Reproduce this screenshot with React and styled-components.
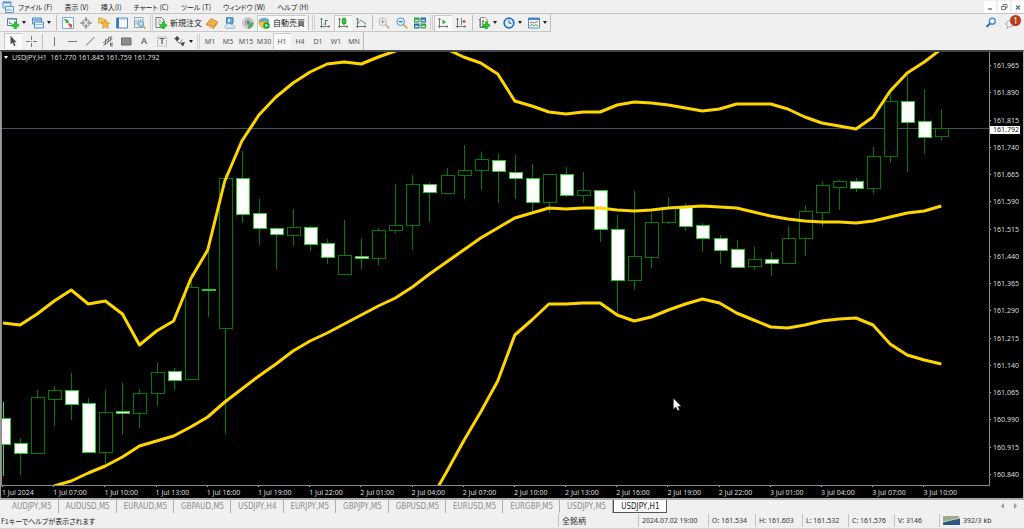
import React, { useState } from "react";
import styled, { createGlobalStyle, css } from "styled-components";

const STEP = 17.06;
const LEFT = 3;
const VIEW = { x: 2, y: 52, w: 987, h: 433 };

// high, body top, body bottom, low, bearish
const candles = [
  [402, 418, 444, 476, 1], [438, 443, 453, 475, 1], [390, 397, 453, 453, 0], [386, 390, 399, 426, 0],
  [373, 390, 404, 420, 1], [398, 403, 452, 452, 1], [390, 412, 452, 464, 0], [383, 411, 413, 435, 1],
  [389, 393, 413, 428, 0], [363, 372, 393, 406, 0], [368, 371, 380, 390, 1], [274, 287, 379, 380, 0],
  [251, 289, 290, 317, 1], [174, 178, 328, 434, 0], [151, 178, 214, 223, 1], [199, 213, 228, 245, 1],
  [227, 228, 234, 269, 1], [209, 227, 235, 246, 0], [226, 227, 244, 251, 1], [239, 243, 257, 264, 1],
  [220, 255, 274, 274, 0], [238, 256, 258, 269, 1], [228, 230, 258, 265, 0], [184, 225, 230, 233, 0],
  [175, 184, 225, 250, 0], [183, 184, 192, 222, 1], [168, 175, 193, 193, 0], [145, 170, 175, 199, 0],
  [152, 159, 170, 190, 0], [153, 160, 171, 203, 1], [155, 172, 178, 199, 1], [164, 178, 202, 212, 1],
  [174, 174, 202, 213, 0], [167, 174, 195, 197, 1], [172, 190, 195, 203, 0], [190, 190, 229, 242, 1],
  [215, 229, 280, 314, 1], [191, 256, 280, 290, 0], [213, 222, 257, 268, 0], [197, 207, 222, 224, 0],
  [203, 207, 226, 231, 1], [223, 225, 238, 252, 1], [235, 238, 250, 264, 1], [240, 249, 267, 267, 1],
  [247, 259, 266, 270, 0], [252, 259, 263, 276, 1], [226, 238, 263, 263, 0], [205, 211, 238, 256, 0],
  [182, 185, 212, 227, 0], [180, 181, 187, 210, 0], [178, 181, 188, 192, 1], [147, 156, 188, 194, 0],
  [92, 101, 156, 163, 0], [75, 101, 122, 172, 1], [89, 121, 137, 154, 1], [109, 128, 136, 141, 0],
];

const upperBand = [
  323, 325, 314, 301, 290, 304, 301, 314, 345, 331, 321, 279, 250, 181, 141, 115, 97, 83, 72, 64,
  62, 64, 57, 51, 46, 43, 49, 57, 63, 74, 101, 106, 112, 114, 112, 112, 105, 102, 103, 105,
  108, 111, 109, 104, 104, 104, 109, 117, 123, 126, 129, 117, 91, 73, 62, 49,
];
const middleBand = [
  506, 500, 494, 486, 481, 473, 466, 457, 446, 441, 436, 427, 417, 402, 389, 376, 364, 351, 341, 333,
  324, 315, 306, 298, 287, 274, 262, 250, 238, 228, 218, 213, 208, 209, 208, 208, 210, 211, 210, 208,
  207, 206, 207, 208, 212, 216, 219, 221, 222, 222, 223, 221, 217, 213, 211, 206,
];
const lowerBand = [
  472, 441, 412, 381, 335, 320, 304, 304, 303, 303, 315, 321, 317, 310, 304, 299, 303, 313, 320, 327,
  328, 325, 321, 319, 318, 325, 344, 355, 360, 364,
];

const prices = [
  "161.965", "161.890", "161.815", "161.740", "161.665", "161.590", "161.515", "161.440",
  "161.365", "161.290", "161.215", "161.140", "161.065", "160.990", "160.915", "160.840",
];
const times = [
  "1 Jul 2024", "1 Jul 07:00", "1 Jul 10:00", "1 Jul 13:00", "1 Jul 16:00", "1 Jul 19:00", "1 Jul 22:00",
  "2 Jul 01:00", "2 Jul 04:00", "2 Jul 07:00", "2 Jul 10:00", "2 Jul 13:00", "2 Jul 16:00", "2 Jul 19:00",
  "2 Jul 22:00", "3 Jul 01:00", "3 Jul 04:00", "3 Jul 07:00", "3 Jul 10:00",
];
const menus = ["ファイル (F)", "表示 (V)", "挿入(I)", "チャート (C)", "ツール (T)", "ウィンドウ (W)", "ヘルプ (H)"];
const frames = ["M1", "M5", "M15", "M30", "H1", "H4", "D1", "W1", "MN"];
const charts = [
  "AUDJPY,M5", "AUDUSD,M5", "EURAUD,M5", "GBPAUD,M5", "USDJPY,H4", "EURJPY,M5",
  "GBPJPY,M5", "GBPUSD,M5", "EURUSD,M5", "EURGBP,M5", "USDJPY,M5", "USDJPY,H1",
];

const barX = (i) => LEFT + i * STEP;
const toPoints = (list, first = 0) => list.map((y, i) => `${barX(i + first)},${y}`).join(" ");

const Icon = ({ children }) => (
  <svg width="12" height="12" viewBox="0 0 12 12" fill="none" aria-hidden="true">
    {children}
  </svg>
);
const Plus = () => <path d="M7.2 4.8h2.4v2.4H12v2.4H9.6V12H7.2V9.6H4.8V7.2h2.4z" fill="#22c928" stroke="#109a16" strokeWidth=".4" />;
const Axes = () => <path d="M2.5 1v10M1 9.5h10M1.5 2.5l1-1.5 1 1.5M9.5 8.5l1.5 1-1.5 1" stroke="#777" />;

const icons = {
  app: (
    <Icon>
      <path d="M1 1h8v6H1z" fill="#d6eafa" stroke="#5a9bd0" />
      <path d="M1 1.5h8" stroke="#4b8dc6" strokeWidth="1.5" />
      <path d="M3.5 5.5h8v6h-8z" fill="#eef7fd" stroke="#5a9bd0" />
      <path d="M5 10V8m2 2V7.500m2 2.500V8.500" stroke="#5a9bd0" />
    </Icon>
  ),
  newChart: (
    <Icon>
      <path d="M.5 1.500h9v7h-9z" fill="#fff" stroke="#5d7f93" />
      <path d="M1 2h8" stroke="#6d9bb5" strokeWidth="1.5" />
      <path d="M2.500 4v3M2 6.500h3" stroke="#6a8292" strokeWidth=".8" />
      <Plus />
    </Icon>
  ),
  profiles: (
    <Icon>
      <path d="M.5 1h9v6h-9z" fill="#bfdcf3" stroke="#4a8cc5" />
      <path d="M.5 3h9" stroke="#4a8cc5" />
      <path d="M2.500 5h9v6h-9z" fill="#e7f2fb" stroke="#4a8cc5" />
      <path d="M2.500 7.500h9" stroke="#8bb8de" />
    </Icon>
  ),
  market: (
    <Icon>
      <path d="M.5 .5h11v11H.5z" fill="#f4f9fd" stroke="#7ea9cf" />
      <path d="M2 2.500l2-.5 1.500 1.500L6.500 3v3H3.500l1-1z" fill="#27a52c" />
      <path d="M6 7l1.500-1L9 7.500l1-.5v3.500H7l.8-1z" fill="#d9532b" />
    </Icon>
  ),
  crosshair: (
    <Icon>
      <circle cx="6" cy="6" r="3.600" stroke="#888" />
      <path d="M6 0v5M6 7v5M0 6h5M7 6h5" stroke="#777" />
    </Icon>
  ),
  navigator: (
    <Icon>
      <path d="M0 2V1h4l1 1.500h3V6H0z" fill="#efc65c" stroke="#c89a36" strokeWidth=".6" />
      <path d="M7.500 2.800l1.300 2.800 3 .3-2.200 2.200.6 3.200-2.700-1.600-2.800 1.600.6-3.200L3 5.900l3.100-.3z" fill="#f8ba2e" stroke="#bb8222" strokeWidth=".6" />
    </Icon>
  ),
  terminal: (
    <Icon>
      <path d="M.5 1h11v10H.5z" fill="#f8fbfe" stroke="#4f8ec4" />
      <path d="M2 1v10" stroke="#3a79b3" strokeWidth="2" />
      <path d="M4.500 2.500h1.500m1 0h1.500" stroke="#9bc1e2" />
    </Icon>
  ),
  tester: (
    <Icon>
      <path d="M.5 .5h8.500v10H.5z" fill="#f5f8fb" stroke="#8faabd" />
      <path d="M2 3v5M4 2v5M6.500 2v2" stroke="#9aabb6" />
      <circle cx="6.700" cy="6.700" r="2.800" fill="#b9dbf1" stroke="#5e9bc8" />
      <path d="M8.800 8.800l2.700 2.700" stroke="#d39b43" strokeWidth="1.500" />
    </Icon>
  ),
  order: (
    <Icon>
      <path d="M1 .5h5.500L9 3v7.500H1z" fill="#fafafa" stroke="#777" />
      <path d="M3 3h3M3 5h3M3 7h2" stroke="#888" strokeWidth=".8" />
      <Plus />
    </Icon>
  ),
  book: (
    <Icon>
      <path d="M.5 7L5 1.500l6.500 3.300L7.500 10z" fill="#efb048" stroke="#b9761e" strokeWidth=".7" />
      <path d="M.5 7l7 3.200v1.500L.8 8.500z" fill="#fff0cf" stroke="#b9761e" strokeWidth=".6" />
      <path d="M7.500 10.200l4-5.200v1.800l-4 4.900z" fill="#cf8527" />
    </Icon>
  ),
  person: (
    <Icon>
      <path d="M2.500 .8h6.500v5.500h-6.500z" fill="#69b1e9" stroke="#2e78b8" />
      <path d="M4 2h2v3H4z" fill="#d9effc" />
      <path d="M3 11.200C.3 11.400.2 8.300 2.500 8c.6-2 3.600-2 4.300-.3 1.600-.9 2.900.3 2.700 1.300 2.200.1 2 2.200.2 2.200z" fill="#e5eff8" stroke="#7d9fbd" strokeWidth=".8" />
    </Icon>
  ),
  signal: (
    <Icon>
      <circle cx="6" cy="6" r="5.200" fill="#e4e4e4" stroke="#aaa" />
      <circle cx="6" cy="5.800" r="3" fill="#bfc4c6" stroke="#8a8f92" />
      <circle cx="6" cy="5.500" r="1.300" fill="#526b75" />
      <path d="M6 12l.5-5.500c3-.5 5-2 5-.5 0 3-2 5.500-5.500 6z" fill="#5cab62" />
    </Icon>
  ),
  auto: (
    <Icon>
      <path d="M1 4c1-3.500 9-4 10 0l-1.500 2h-7z" fill="#5fb0d8" stroke="#3681aa" strokeWidth=".6" />
      <path d="M1 4.500h9V9l-4 2.500C1.500 9 .8 7 1 4.500z" fill="#f4c13e" stroke="#c88b1d" strokeWidth=".6" />
      <circle cx="8.500" cy="8.500" r="3.200" fill="#16a52c" />
      <path d="M7.500 6.800v3.400l2.800-1.700z" fill="#fff" />
    </Icon>
  ),
  bars: (
    <Icon>
      <Axes />
      <path d="M6.500 3v5M4.800 7h1.700M6.500 3.500h2.200" stroke="#239c35" />
    </Icon>
  ),
  candle: (
    <Icon>
      <Axes />
      <path d="M7 .5v8" stroke="#138c22" />
      <path d="M5.200 1.800h3.600v4.700H5.200z" fill="#2dcf3f" stroke="#12991f" strokeWidth=".8" />
    </Icon>
  ),
  line: (
    <Icon>
      <Axes />
      <path d="M2.500 7.500C5 2 6.500 3 7.500 4.500L11 7" stroke="#3b9453" />
    </Icon>
  ),
  zoomIn: (
    <Icon>
      <circle cx="4.700" cy="4.700" r="3.800" fill="#f3f3f3" stroke="#b5b5b5" />
      <path d="M2.700 4.700h4M4.700 2.700v4" stroke="#999" />
      <path d="M7.600 7.600l3.700 3.700" stroke="#b5b5b5" strokeWidth="1.800" />
    </Icon>
  ),
  zoomOut: (
    <Icon>
      <circle cx="4.700" cy="4.700" r="3.800" fill="#e0f0fc" stroke="#4a96cf" />
      <path d="M2.700 4.700h4" stroke="#2c6ea5" strokeWidth="1.200" />
      <path d="M7.600 7.600l3.700 3.700" stroke="#d9a545" strokeWidth="1.800" />
    </Icon>
  ),
  tile: (
    <Icon>
      <path d="M0 .5h5.500v5H0zM6.500 6.500H12v5H6.500z" fill="#36a143" />
      <path d="M6.500 .5H12v5H6.500zM0 6.500h5.500v5H0z" fill="#2870a8" />
      <path d="M1 3.500h3.500M7.500 3.500H11M1 9.500h3.500M7.500 9.500H11" stroke="#d8efdf" strokeWidth="1.500" />
    </Icon>
  ),
  scroll: (
    <Icon>
      <Axes />
      <path d="M5.500 2.500v5l3.500-2.500z" fill="#24b43a" />
    </Icon>
  ),
  shift: (
    <Icon>
      <Axes />
      <path d="M6.500 1v7" stroke="#5a8eb8" />
      <path d="M11 4.500H8" stroke="#d65524" strokeWidth="1.300" />
      <path d="M9.500 2.500v4L7 4.500z" fill="#d65524" />
    </Icon>
  ),
  indicators: (
    <Icon>
      <path d="M2.500 .5H7L9 2.500v7H2.500z" fill="#fafafa" stroke="#888" />
      <path d="M.5 2.500h1.500v8H7" stroke="#777" />
      <path d="M6 2.500C4.500 2.500 5 5 4.500 8M4 4.500h2" stroke="#555" strokeWidth=".8" />
      <Plus />
    </Icon>
  ),
  clock: (
    <Icon>
      <circle cx="6" cy="6" r="4.800" fill="#e2f1fc" stroke="#2972b6" strokeWidth="1.800" />
      <path d="M6 3v3.300h2.500" stroke="#41637f" />
    </Icon>
  ),
  template: (
    <Icon>
      <path d="M.5 1h11v10H.5z" fill="#f7fbfe" stroke="#528ebd" />
      <path d="M.5 2h11" stroke="#4988bd" strokeWidth="2" />
      <path d="M2 6l2-1 1.500 1L10 4.500" stroke="#b5654e" />
      <path d="M2 9l2-1.500L6 9l1.500-1.500L10 9" stroke="#459a57" />
    </Icon>
  ),
  pointer: (
    <Icon>
      <path d="M3.500 .8v8.700l2-1.900 1.500 3.600 1.500-.7-1.500-3.300h2.700z" fill="#4e4e4e" />
    </Icon>
  ),
  cross: (
    <Icon>
      <path d="M6.500 1v4M6.500 8v4M1 6.500h4M8 6.500h4" stroke="#777" />
      <path d="M6 6h1v1H6z" fill="#777" />
    </Icon>
  ),
  vline: <Icon><path d="M6.500 2v9" stroke="#777" /></Icon>,
  hline: <Icon><path d="M2 6.500h9" stroke="#777" /></Icon>,
  diag: <Icon><path d="M2 10.500l8.500-8.500" stroke="#666" /></Icon>,
  channel: (
    <Icon>
      <path d="M1 8l8-6M1.500 10.500l9-7M4 3.500L3 10M7 1.500L5.500 8.500M9.500 1L8 6.500" stroke="#666" strokeWidth=".9" />
      <path d="M11 8H8.500v3H11M8.500 9.500h2" stroke="#555" strokeWidth=".8" />
    </Icon>
  ),
  rect: <Icon><path d="M1.500 3h9.500v7H1.500z" fill="#8c8c8c" stroke="#6c6c6c" /></Icon>,
  label: <Icon><path d="M1.500 2h9v9h-9z" stroke="#999" strokeDasharray="1 1" /></Icon>,
  shapes: (
    <Icon>
      <path d="M0 4l3-3 3 3-1.500.5L3 7 1.800 4.500zM6 8l5-1-2 4.500z" fill="#444" />
      <path d="M3.500 7l2 1 3-3.500" stroke="#777" />
    </Icon>
  ),
};

// drop: arrow for a drop-down list, sep: divider after the button, grip: start of next strip
const mainTools = [
  { icon: "newChart", name: "New chart", drop: true },
  { icon: "profiles", name: "Profiles", drop: true, sep: true },
  { icon: "market", name: "Market watch" },
  { icon: "crosshair", name: "Data window" },
  { icon: "navigator", name: "Navigator" },
  { icon: "terminal", name: "Terminal" },
  { icon: "tester", name: "Strategy tester", grip: true },
  { icon: "order", name: "New order", text: "新規注文" },
  { icon: "book", name: "MetaEditor" },
  { icon: "person", name: "Community" },
  { icon: "signal", name: "Signals" },
  { icon: "auto", name: "Auto trading", text: "自動売買", pressed: true, sep: true, grip: true },
  { icon: "bars", name: "Bar chart" },
  { icon: "candle", name: "Candlesticks", pressed: true },
  { icon: "line", name: "Line chart", sep: true },
  { icon: "zoomIn", name: "Zoom in" },
  { icon: "zoomOut", name: "Zoom out" },
  { icon: "tile", name: "Tile windows", grip: true },
  { icon: "scroll", name: "Auto scroll", pressed: true },
  { icon: "shift", name: "Chart shift", sep: true },
  { icon: "indicators", name: "Indicators", drop: true },
  { icon: "clock", name: "Periods", drop: true },
  { icon: "template", name: "Templates", drop: true },
];
const drawTools = [
  { icon: "pointer", name: "Cursor", pressed: true },
  { icon: "cross", name: "Crosshair", sep: true },
  { icon: "vline", name: "Vertical line" },
  { icon: "hline", name: "Horizontal line" },
  { icon: "diag", name: "Trendline" },
  { icon: "channel", name: "Channel" },
  { icon: "rect", name: "Rectangle" },
  { letter: "A", name: "Text" },
  { icon: "label", letter: "T", name: "Label" },
  { icon: "shapes", name: "Arrows", drop: true },
];

const Tools = ({ items }) =>
  items.map((t) => (
    <React.Fragment key={t.name}>
      <ToolButton type="button" aria-label={t.text || t.name} $pressed={t.pressed} $drop={t.drop} $wide={t.text}>
        {t.icon && icons[t.icon]}
        {t.letter && <Letter $over={t.icon}>{t.letter}</Letter>}
        {t.text}
        {t.drop && <Caret />}
      </ToolButton>
      {t.sep && <Sep />}
      {t.grip && <Grip />}
    </React.Fragment>
  ));

function PriceChart() {
  return (
    <Plot viewBox={`${VIEW.x} ${VIEW.y} ${VIEW.w} ${VIEW.h}`} preserveAspectRatio="none" role="img" aria-label="USDJPY H1">
      <path d="M2 128.500H989" stroke="#43515c" />
      {candles.map(([high, top, bottom, low, bear], i) => {
        const x = Math.round(barX(i));
        return (
          <g key={i} stroke={bear ? "#2fc52f" : "#007c00"}>
            <path d={`M${x + 0.5} ${high}V${top}M${x + 0.5} ${bottom}V${low}`} stroke={i ? "#007c00" : "#46d846"} />
            <rect x={x - 6 + 0.5} y={top + 0.5} width="13" height={bottom - top} fill={bear ? "#fff" : "#000"} />
          </g>
        );
      })}
      <g fill="none" stroke="#ffd500" strokeWidth="3" strokeLinejoin="round">
        <polyline points={toPoints(upperBand)} />
        <polyline points={toPoints(middleBand)} />
        <polyline points={`438,487 ${toPoints(lowerBand, 26)}`} />
      </g>
      <path d="M673.500 398.500v10.500l2.400-2.200 1.800 3.700 1.700-.8-1.700-3.500h3.300z" fill="#fff" stroke="#555" strokeWidth=".4" />
    </Plot>
  );
}

export default function App() {
  const [frame, setFrame] = useState("H1");
  const [chart, setChart] = useState("USDJPY,H1");

  return (
    <Window>
      <GlobalStyle />
      <MenuBar>
        {icons.app}
        {menus.map((m) => (
          <MenuItem type="button" key={m}>{m}</MenuItem>
        ))}
        <WindowButtons>
          <WindowButton type="button" aria-label="Minimize">
            <Icon><path d="M4 8h4" stroke="#556b80" strokeWidth="1.300" /></Icon>
          </WindowButton>
          <WindowButton type="button" aria-label="Restore">
            <Icon><path d="M5 5V3.500h4V7H7.500M3.500 5.500h4v3h-4z" stroke="#667c92" /></Icon>
          </WindowButton>
          <WindowButton type="button" aria-label="Close">
            <Icon><path d="M4 4.500l4 4M8 4.500l-4 4" stroke="#556b80" strokeWidth="1.200" /></Icon>
          </WindowButton>
        </WindowButtons>
      </MenuBar>

      <ToolArea>
        <div>
          <Strip $edge>
            <Tools items={mainTools} />
          </Strip>
          <Strip>
            <Tools items={drawTools} />
            <Grip />
            {frames.map((f) => (
              <FrameButton type="button" key={f} $pressed={f === frame} onClick={() => setFrame(f)}>{f}</FrameButton>
            ))}
          </Strip>
        </div>
        <Corner>
          <PlainButton type="button" aria-label="Search">
            <Icon>
              <circle cx="7.300" cy="4.200" r="3" fill="#e7f2fb" stroke="#4486c4" strokeWidth="1.300" />
              <path d="M5 6.500L1.500 10" stroke="#2d68ae" strokeWidth="1.800" />
            </Icon>
          </PlainButton>
          <PlainButton type="button" aria-label="Notifications">
            <Icon>
              <path d="M2 5c3-3 8-1 7 2.500-1 2-3 2.300-4.500 2L2 11.500l.5-2.500C.8 8 .8 6 2 5z" fill="#eee" stroke="#a5a5a5" />
            </Icon>
            <Badge>1</Badge>
          </PlainButton>
        </Corner>
      </ToolArea>

      <ChartWindow>
        <ChartRow>
          <PlotBox>
            <PriceChart />
            <Title>
              <Caret $light />
              <span>USDJPY,H1&nbsp; 161.770 161.845 161.759 161.792</span>
            </Title>
          </PlotBox>
          <PriceAxis>
            {prices.map((p) => (
              <Price key={p}>{p}</Price>
            ))}
            <LastPrice>161.792</LastPrice>
          </PriceAxis>
        </ChartRow>
        <TimeAxis>
          {times.map((t) => (
            <Time key={t}>{t}</Time>
          ))}
        </TimeAxis>
      </ChartWindow>

      <TabBar>
        {charts.map((c) => (
          <Tab type="button" key={c} $active={c === chart} onClick={() => setChart(c)}>{c}</Tab>
        ))}
        <Arrows>
          <PlainButton type="button" aria-label="Scroll left">
            <Icon><path d="M7 3v6L4 6z" fill="#999" /></Icon>
          </PlainButton>
          <PlainButton type="button" aria-label="Scroll right">
            <Icon><path d="M5 3v6l3-3z" fill="#999" /></Icon>
          </PlainButton>
        </Arrows>
      </TabBar>

      <StatusBar>
        <Hint>F1キーでヘルプが表示されます</Hint>
        <Cell $w={80} $kanji>全銘柄</Cell>
        <Cell $w={70}>2024.07.02 19:00</Cell>
        <Cell $w={47}>O: 161.534</Cell>
        <Cell $w={47}>H: 161.603</Cell>
        <Cell $w={46}>L: 161.532</Cell>
        <Cell $w={46}>C: 161.576</Cell>
        <Cell $w={45}>V: 3146</Cell>
        <Cell $w={85}>
          <svg width="17" height="9" viewBox="0 0 17 9" aria-hidden="true">
            <path d="M1 0v9M3 0v9M5 0v9M7 0v9M9 0v9M11 0v9M13 0v9M15 0v9" stroke="#7d8a57" strokeWidth="1.400" />
            <path d="M0 6l17-4v7H0z" fill="#35658f" />
            <path d="M2 9V5M4 9V5M6 9V4M8 9V4M10 9V4M12 9V3M14 9V3M16 9V2" stroke="#20384f" strokeWidth=".6" />
            <path d="M0 6l17-4" stroke="#d9e6e9" strokeWidth=".8" />
          </svg>
          392/3 kb
        </Cell>
      </StatusBar>
    </Window>
  );
}

const GlobalStyle = createGlobalStyle`
  * {
    box-sizing: border-box;
  }
  body {
    margin: 0;
    background: #f0f0f0;
    color: #222;
    font-family: "Noto Sans", "Noto Sans CJK JP", sans-serif;
    font-size: 7px;
  }
  button {
    margin: 0;
    padding: 0;
    border: 0;
    background: none;
    color: inherit;
    font: inherit;
  }
  svg {
    display: block;
    flex: none;
  }
`;

const Window = styled.div`
  display: flex;
  flex-direction: column;
  height: 100vh;
  overflow: hidden;
`;
const MenuBar = styled.header`
  display: flex;
  align-items: center;
  height: 14px;
  padding-left: 2px;
  border-bottom: 1px solid #c4c4c4;
`;
const MenuItem = styled.button`
  padding: 0 8px 0 4px;
  font-family: "Noto Sans CJK JP", sans-serif;
  font-size: 7px;
  font-feature-settings: "palt";
  line-height: 12px;
  white-space: nowrap;
`;
const WindowButtons = styled.div`
  display: flex;
  gap: 2px;
  margin-left: auto;
`;
const WindowButton = styled.button`
  width: 12px;
  height: 12px;
  background: #fff;
`;
const ToolArea = styled.div`
  display: flex;
  justify-content: space-between;
`;
const Strip = styled.div`
  display: flex;
  align-items: center;
  width: max-content;
  height: 18px;
  padding-left: 4px;
  border-right: 1px solid #bdbdbd;
  ${({ $edge }) => $edge && css`
    border-bottom: 1px solid #c8c8c8;
  `}
`;
const pressedLook = css`
  background: #f9f9f9;
  box-shadow: inset 1px 1px 0 #c9c9c9;
`;
const ToolButton = styled.button`
  display: flex;
  align-items: center;
  justify-content: center;
  gap: 3px;
  position: relative;
  width: ${({ $wide, $drop }) => ($wide ? "49px" : $drop ? "25px" : "18px")};
  height: 16px;
  font-family: "Noto Sans CJK JP", sans-serif;
  font-size: 8px;
  white-space: nowrap;
  ${({ $pressed }) => $pressed && pressedLook}
`;
const Letter = styled.span`
  font-family: "Liberation Sans", sans-serif;
  font-size: 9px;
  font-weight: 700;
  color: #666;
  ${({ $over }) => $over && css`
    position: absolute;
    inset: 0;
    line-height: 16px;
  `}
`;
const Caret = styled.span`
  border: 2px solid transparent;
  border-top: 3px solid ${({ $light }) => ($light ? "#fff" : "#222")};
  border-bottom: 0;
`;
const Sep = styled.span`
  width: 1px;
  height: 15px;
  margin: 0 2px;
  background: #bdbdbd;
`;
const Grip = styled.span`
  width: 3px;
  height: 15px;
  margin: 0 1px;
  border: solid #cfcfcf;
  border-width: 0 1px;
`;
const FrameButton = styled.button`
  width: 18px;
  height: 16px;
  color: #555;
  ${({ $pressed }) => $pressed && pressedLook}
`;
const Corner = styled.div`
  display: flex;
  align-items: center;
  gap: 8px;
  height: 18px;
  padding-right: 7px;
`;
const PlainButton = styled.button`
  position: relative;
  width: 12px;
  height: 12px;
`;
const Badge = styled.span`
  position: absolute;
  top: -2px;
  right: -4px;
  width: 11px;
  height: 11px;
  border-radius: 50%;
  background: #b83a1c;
  color: #fff;
  font-size: 8px;
  line-height: 11px;
  text-align: center;
`;
const ChartWindow = styled.main`
  display: flex;
  flex: 1;
  flex-direction: column;
  min-height: 0;
  border: solid #444;
  border-width: 2px 1px 0;
  border-left-color: #999;
  border-right-color: #bbb;
  background: #000;
  color: #ddd;
  font-family: "Noto Sans", sans-serif;
`;
const ChartRow = styled.div`
  display: flex;
  flex: 1;
  min-height: 0;
`;
const PlotBox = styled.div`
  position: relative;
  flex: 1;
  min-width: 0;
  border: solid #8a8a8a;
  border-width: 0 1px 1px;
`;
const Plot = styled.svg`
  width: 100%;
  height: 100%;
`;
const Title = styled.div`
  display: flex;
  align-items: center;
  gap: 4px;
  position: absolute;
  top: 1px;
  left: 2px;
  line-height: 9px;
`;
const PriceAxis = styled.div`
  display: flex;
  flex-direction: column;
  justify-content: space-between;
  position: relative;
  width: 33px;
  padding: 9px 0 7px;
`;
const Price = styled.span`
  display: flex;
  align-items: center;
  gap: 2px;
  line-height: 9px;

  &::before {
    content: "";
    width: 1px;
    height: 1px;
    background: #aaa;
  }
`;
const LastPrice = styled.span`
  position: absolute;
  top: 17%;
  left: 0;
  right: 3px;
  padding-left: 3px;
  background: #fff;
  color: #111;
  line-height: 8px;
`;
const TimeAxis = styled.div`
  display: grid;
  grid-template-columns: repeat(18, minmax(0, 10fr)) minmax(0, 13fr);
  height: 12px;
  margin: 0 33px 0 1px;
  white-space: nowrap;
`;
const Time = styled.span`
  line-height: 11px;

  &::before {
    content: "";
    display: block;
    width: 1px;
    height: 1px;
    background: #aaa;
  }
`;
const TabBar = styled.nav`
  display: flex;
  height: 15px;
  padding-left: 5px;
  border-top: 2px solid #a8a8a8;
`;
const Tab = styled.button`
  display: flex;
  align-items: center;
  height: 13px;
  padding: 0 6px 0 7px;
  border: 0 solid #b0b0b0;
  border-right-width: 1px;
  color: #8b8f88;
  font-family: "DejaVu Sans Condensed", "Noto Sans", sans-serif;
  font-size: 8px;
  ${({ $active }) => $active && css`
    border: 1px solid #555;
    border-top: 0;
    background: #fff;
    color: #222;
  `}
`;
const Arrows = styled.div`
  display: flex;
  margin-left: auto;
  padding-right: 3px;
`;
const StatusBar = styled.footer`
  display: flex;
  align-items: center;
  height: 16px;
  padding-left: 1px;
  border-bottom: 1px solid #d0d0d0;
`;
const Hint = styled.span`
  flex: 1;
  font-family: "Noto Sans CJK JP", sans-serif;
  font-feature-settings: "palt";
`;
const Cell = styled.span`
  display: flex;
  align-items: center;
  gap: 3px;
  width: ${({ $w }) => $w}px;
  height: 13px;
  padding-left: 3px;
  border-left: 1px solid #c4c4c4;
  color: #333;
  font-size: ${({ $kanji }) => ($kanji ? "8px" : "7px")};
  white-space: nowrap;
`;
